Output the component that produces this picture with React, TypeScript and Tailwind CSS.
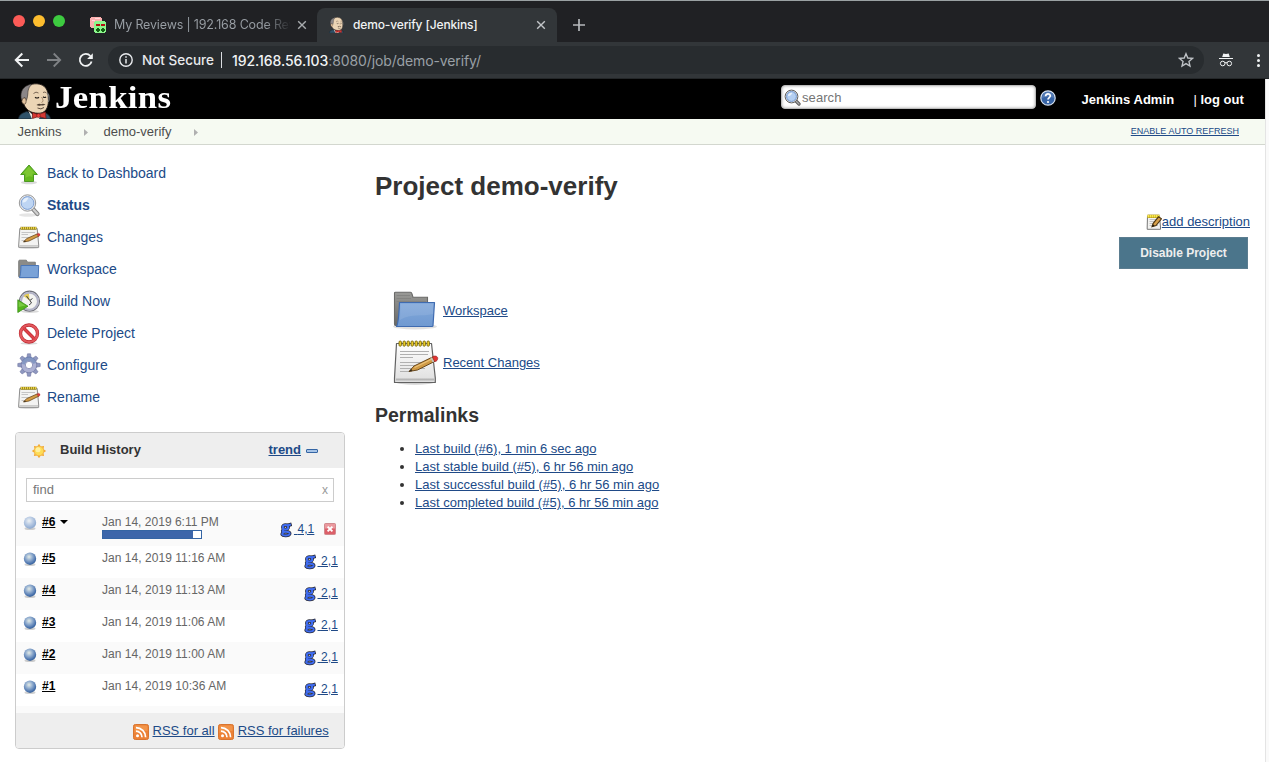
import React from "react";

type IconProps = { className?: string };

const Butler = ({ className }: IconProps) => (
  <svg viewBox="0 0 33 36" className={className} preserveAspectRatio="none">
    <path d="M.5 36C1 31.500 4 30 9 28.500L16 33L24 29C29 30 32 32 32.500 36Z" fill="#2f5269" stroke="#16232c" strokeWidth=".8" />
    <path d="M10 27L16 33L24 29L21 36H14Z" fill="#e9e5de" />
    <path d="M8 25C5 21 4 17 5 10C7 3 13 .6 19 .8C27 1.300 30.500 7 30.300 15C31 22 29 29.500 22 30.200C16 30.500 11 29 8 25Z" fill="#ecd5b5" stroke="#221c18" strokeWidth=".9" />
    <path d="M3.500 17C2 11 3.500 4.500 10 2.200C12 1.400 13 1.200 14 1.300C10.500 4 10 7.500 9.800 11C9.500 14 9 16.500 8 17.500L7 14.500Z" fill="#8b8687" stroke="#2d2927" strokeWidth=".6" />
    <path d="M4.300 16C7 13.500 9 16 7.800 20C7.200 22 4.500 21.500 3.800 18.500Z" fill="#e0c19d" stroke="#4b3a2c" strokeWidth=".7" />
    <path d="M29.300 10C31.500 12 31.500 17 30.300 19" fill="none" stroke="#777" strokeWidth="1.300" />
    <path d="M15.500 10.500Q18 8 20.500 10M25 9.500Q27 8.300 28.500 10" fill="none" stroke="#5c4a3c" strokeWidth=".8" />
    <path d="M17 14.200Q19 15.800 21 14.200M25 13.800Q26.800 15.200 28 13.800" fill="none" stroke="#221c18" strokeWidth="1.100" />
    <path d="M23.500 14Q26.500 18.500 23.500 19.500" fill="none" stroke="#8a6b4d" strokeWidth=".7" />
    <path d="M18.500 22Q21 20 23 21.200Q25 20 27.500 21.500Q25 23 23 22.200Q21 23.500 18.500 22Z" fill="#554538" />
    <path d="M19.500 25Q23 27 26 24.500" fill="none" stroke="#3a2c23" strokeWidth=".8" />
    <path d="M14.500 29.500L20 31.500L27.500 29L28 35.500L20.500 33.500L14.500 35.500Z" fill="#d33833" stroke="#6d1512" strokeWidth=".7" />
    <ellipse cx="20.500" cy="32.500" rx="1.800" ry="2" fill="#ef3d3a" stroke="#6d1512" strokeWidth=".5" />
  </svg>
);

const Magnifier = ({ className }: IconProps) => (
  <svg viewBox="0 0 24 24" className={className}>
    <ellipse cx="11" cy="22" rx="9" ry="1.700" fill="#000" opacity=".1" />
    <path d="M15.500 15.500L20.500 21" stroke="#858585" strokeWidth="4.200" strokeLinecap="round" />
    <path d="M16 16L20.500 21" stroke="#cfcfcf" strokeWidth="2.200" strokeLinecap="round" />
    <circle cx="10.500" cy="10" r="8.200" fill="#eee" stroke="#8d8d8d" strokeWidth=".9" />
    <circle cx="10.500" cy="10" r="6.400" fill="#bed5f3" stroke="#7d9fd3" strokeWidth="1" />
    <path d="M5.500 9.500C5.500 6 8.500 4.300 11.500 4.700C9.500 8.500 8 10 5.500 9.500Z" fill="#e6f0fb" />
  </svg>
);

const SearchGlass = ({ className }: IconProps) => (
  <svg viewBox="0 0 17 17" className={className}>
    <path d="M11.500 11.500L15 15" stroke="#555" strokeWidth="3.200" strokeLinecap="round" />
    <path d="M12 12L15 15" stroke="#aaa" strokeWidth="1.400" strokeLinecap="round" />
    <circle cx="7.500" cy="7.500" r="6.400" fill="#e4e4e4" stroke="#5f5f5f" strokeWidth="1" />
    <circle cx="7.500" cy="7.500" r="4.900" fill="#b4cff2" stroke="#6f96d0" strokeWidth="1" />
    <path d="M4 7C4 4.500 6 3.500 8.500 3.800C7 6.500 6 7.500 4 7Z" fill="#e6f0fb" />
  </svg>
);

const Notepad = ({ className }: IconProps) => (
  <svg viewBox="0 0 48 48" className={className}>
    <defs>
      <linearGradient id="paper" x1="0" y1="0" x2="0" y2="1">
        <stop offset="0" stopColor="#fff" />
        <stop offset="1" stopColor="#dedede" />
      </linearGradient>
    </defs>
    <ellipse cx="24" cy="43.500" rx="19" ry="2.200" fill="#000" opacity=".18" />
    <path d="M5.500 4.500H40.500L44.300 39V43.500H3.500V39Z" fill="url(#paper)" stroke="#626262" strokeWidth="1.200" strokeLinejoin="round" />
    <path d="M5 40.500H43" stroke="#b5b5b5" strokeWidth="2" />
    <path d="M9 12.500H38M9 15.500H37M9 18.500H22M9 23.500H38M9 26.500H33M9 29.500H34M9 32.500H21" stroke="#b0b0b0" strokeWidth="1.100" />
    {[9, 13, 17, 21, 25, 29, 33, 37].map((x) => (
      <rect key={x} x={x - 1} y="2" width="2.400" height="5.200" rx="1.100" fill="#f5d528" stroke="#75640c" strokeWidth=".9" />
    ))}
    <path d="M18 32.500L23 27L40.500 18.500C43 17 46.500 19 44.500 22L26.500 31Z" fill="#cf9a45" stroke="#5b3b12" strokeWidth=".9" />
    <path d="M23.500 28.500L41 20" stroke="#ecc27a" strokeWidth="1.300" />
    <path d="M41.500 17.800C44 16 47.800 17.500 46.500 20.500C46 22 45 22.500 43.500 22.500Z" fill="#e33434" stroke="#8a2222" strokeWidth=".6" />
    <path d="M40 18.700L42.500 23" stroke="#c2c2c2" strokeWidth="1.600" />
    <path d="M18 32.500L20.200 30L21.500 31.500Z" fill="#2c2418" />
  </svg>
);

const NotepadSmall = ({ className }: IconProps) => (
  <svg viewBox="0 0 24 24" className={className}>
    <ellipse cx="12" cy="22.800" rx="10" ry="1" fill="#000" opacity=".18" />
    <path d="M2.800 3.500H20.200L21.700 20V22.300H1.700V20Z" fill="#f3f3f2" stroke="#808080" strokeWidth=".9" />
    <path d="M2.500 20.800H21" stroke="#bbb" strokeWidth="1" />
    <path d="M4.500 7.500H18M4.500 9.500H11M4.500 12.500H16M4.500 15.500H11" stroke="#c0c0c0" strokeWidth=".9" />
    <path d="M3.500 3.300H19.500" stroke="#8e7c1c" strokeWidth="3" />
    <path d="M4 3.200H19.500" stroke="#e8d144" strokeWidth="2.200" strokeDasharray="1.200 .8" />
    <path d="M6.500 17L9.500 13.700L20 9L22 11L12 16Z" fill="#d39c45" stroke="#6a481b" strokeWidth=".8" />
    <path d="M19.800 9L21.500 8.200Q24 9 22.600 10.800L21.400 11.500Z" fill="#dc3c3c" stroke="#933" strokeWidth=".4" />
    <path d="M6.500 17L8 15.400L9 16.400Z" fill="#2c2418" />
  </svg>
);

const EditNote = ({ className }: IconProps) => (
  <svg viewBox="0 0 16 16" className={className}>
    <path d="M1.500 2H13.500L14.500 13V15.300H1.200V13Z" fill="#f2f2f0" stroke="#777" strokeWidth="1" />
    <path d="M3.500 5.500H11M3.500 7.500H9M3.500 9.500H7M3.500 11.500H12" stroke="#b8b8b8" strokeWidth=".8" />
    <path d="M1.500 2.300H13.500" stroke="#a98c0a" strokeWidth="3.400" />
    <path d="M1.500 2.200H13.500" stroke="#fae94e" strokeWidth="2.600" strokeDasharray="1.700 .4" />
    <path d="M6 12.700L7.200 9.300L12.500 2.800L15.500 4.800L10 11.500Z" fill="#d7a04b" stroke="#4d3510" strokeWidth="1.100" />
    <path d="M6 12.700L6.900 10.300L8.700 11.900Z" fill="#221a0d" />
  </svg>
);

const Folder = ({ className }: IconProps) => (
  <svg viewBox="0 0 48 48" className={className}>
    <defs>
      <linearGradient id="folder-front" x1="0" y1="0" x2="0" y2="1">
        <stop offset="0" stopColor="#82a8da" />
        <stop offset="1" stopColor="#6f99d1" />
      </linearGradient>
      <linearGradient id="folder-back" x1="0" y1="0" x2="0" y2="1">
        <stop offset="0" stopColor="#9a9a97" />
        <stop offset="1" stopColor="#686866" />
      </linearGradient>
    </defs>
    <ellipse cx="24" cy="39.500" rx="22" ry="3" fill="#000" opacity=".12" />
    <path d="M3.500 6Q3.500 5.300 4.500 5.300H19.500Q20.500 5.300 21 7L22 10.200H36.500V38.500H4.500Q3.500 38.500 3.500 37Z" fill="url(#folder-back)" stroke="#6a6a68" strokeWidth="1.100" />
    <path d="M5.500 8.500H19M5.500 11.500H20M5.500 14.500H35" stroke="#80807d" strokeWidth=".8" />
    <path d="M8.500 15.500H43.500L42 38.500Q42 39.500 41 39.500H5.500Q7.500 37 8.500 15.500Z" fill="url(#folder-front)" stroke="#3f6bb0" strokeWidth="1.200" strokeLinejoin="round" />
    <path d="M9.500 17H42.500L42 27C31 30 20 26 9 33Z" fill="#fff" opacity=".1" />
  </svg>
);

const FolderSmall = ({ className }: IconProps) => (
  <svg viewBox="0 0 24 24" className={className}>
    <ellipse cx="12" cy="21" rx="11" ry="1.500" fill="#000" opacity=".12" />
    <path d="M1.700 4.200Q1.700 3.200 2.700 3.200H9.300L10.500 5.200H18.300V20.300H2.700Q1.700 20.300 1.700 19.300Z" fill="#8b8b89" stroke="#767674" strokeWidth=".9" />
    <path d="M4 8.500H21.700L21.200 20.500H2.500Q3.800 18 4 8.500Z" fill="#7aa2d7" stroke="#4a76b8" strokeWidth="1" />
  </svg>
);

const UpArrow = ({ className }: IconProps) => (
  <svg viewBox="0 0 24 24" className={className}>
    <ellipse cx="12" cy="21.500" rx="8" ry="1.800" fill="#000" opacity=".15" />
    <path d="M12 4L20.300 13.500H16.500V20.500H7.500V13.500H3.700Z" fill="#65b91f" stroke="#4b9a22" strokeWidth="1" strokeLinejoin="round" />
    <path d="M12 5.500L18 12.500H15.500V16C12 14 9.500 16 8.500 17V12.500H6Z" fill="#8ed040" opacity=".6" />
  </svg>
);

const ClockPlay = ({ className }: IconProps) => (
  <svg viewBox="0 0 24 24" className={className}>
    <ellipse cx="13" cy="22.500" rx="9" ry="1.400" fill="#000" opacity=".15" />
    <circle cx="12.500" cy="12.200" r="10" fill="#f1f1ee" stroke="#70717a" strokeWidth="1.200" />
    <circle cx="12.500" cy="12.200" r="8.500" fill="#f4f4f1" stroke="#b3b4c8" strokeWidth="2" />
    <path d="M12.500 11.500L6.500 7Q8.500 4.700 12 4.800Z" fill="#e2ca55" />
    <path d="M9.500 7L12.800 11.500L15.500 9.500M13 11.500L14.500 14L12 16" fill="none" stroke="#444" strokeWidth="1" />
    <path d="M.8 10.800L11 17.200L.8 23.500Z" fill="#55b51d" stroke="#388f16" strokeWidth=".8" />
    <path d="M1.700 12.500L8.500 16.500L1.700 18Z" fill="#8ed659" opacity=".65" />
  </svg>
);

const Forbidden = ({ className }: IconProps) => (
  <svg viewBox="0 0 24 24" className={className}>
    <ellipse cx="12" cy="22.400" rx="8.500" ry="1.300" fill="#000" opacity=".15" />
    <circle cx="12" cy="12.500" r="8.500" fill="#fff" stroke="#bd2830" strokeWidth="3.300" />
    <path d="M6 6.500L18 18.500" stroke="#bd2830" strokeWidth="3.400" />
    <circle cx="12" cy="12.500" r="8.500" fill="none" stroke="#e3595e" strokeWidth="2.200" />
    <path d="M6 6.500L18 18.500" stroke="#dd4249" strokeWidth="2.200" />
  </svg>
);

const Gear = ({ className }: IconProps) => (
  <svg viewBox="0 0 24 24" className={className}>
    <g fill="#8f98c0" stroke="#7076a1" strokeWidth=".6">
      {[0, 45, 90, 135, 180, 225, 270, 315].map((a) => (
        <path key={a} d="M9.800 5L10.500 .8H13.500L14.200 5Z" transform={`rotate(${a} 12 12)`} />
      ))}
      <circle cx="12" cy="12" r="7.800" />
    </g>
    <circle cx="12" cy="12" r="7.300" fill="#adb1d3" />
    <path d="M5 11A7 7 0 0 1 19 10Q12 13 5 11Z" fill="#6985b7" opacity=".6" />
    <circle cx="12" cy="12" r="3.700" fill="#fff" stroke="#8a8fb5" strokeWidth=".9" />
  </svg>
);

const Sun = ({ className }: IconProps) => (
  <svg viewBox="0 0 16 16" className={className}>
    {[0, 45, 90, 135, 180, 225, 270, 315].map((a) => (
      <path key={a} d="M6.300 3.500L8 .8L9.700 3.500Z" fill="#f3a72a" transform={`rotate(${a} 8 8)`} />
    ))}
    <circle cx="8" cy="8" r="4.800" fill="#fddc55" stroke="#f5b545" strokeWidth="1" />
    <circle cx="7" cy="6.800" r="2.500" fill="#fff0a0" />
  </svg>
);

const Ball = ({ light = false }: { light?: boolean }) => (
  <svg viewBox="0 0 16 16" className="size-4">
    <defs>
      <radialGradient id={light ? "ball-light" : "ball-dark"} cx=".42" cy=".35" r=".68">
        <stop offset="0" stopColor={light ? "#eef2f3" : "#e4ebe6"} />
        <stop offset=".4" stopColor={light ? "#c0d0e6" : "#94afd0"} />
        <stop offset=".85" stopColor={light ? "#93aed3" : "#426ca9"} />
        <stop offset="1" stopColor={light ? "#93abca" : "#3b608e"} />
      </radialGradient>
    </defs>
    <ellipse cx="8" cy="13.500" rx="5.500" ry="1.500" fill="#000" opacity=".18" />
    <circle cx="8" cy="7.700" r="6.200" fill={light ? "url(#ball-light)" : "url(#ball-dark)"} />
  </svg>
);

const Rss = () => (
  <svg viewBox="0 0 16 16" className="mt-[2px] size-4">
    <rect x=".5" y=".5" width="15" height="15" rx="1.800" fill="#ec8136" stroke="#d9752f" />
    <path d="M1.500 3Q1.500 1.500 3 1.500H13Q14.500 1.500 14.500 3V7Q8 6 1.500 9Z" fill="#f7a257" opacity=".6" />
    <circle cx="4.500" cy="11.700" r="1.500" fill="#fff" />
    <path d="M3 7.200A6 6 0 0 1 9 13.200M3 3.600A9.600 9.600 0 0 1 12.600 13.200" fill="none" stroke="#fff" strokeWidth="1.700" />
  </svg>
);

const StopButton = () => (
  <svg viewBox="0 0 12 12" className="size-3">
    <rect x=".5" y=".5" width="11" height="11" rx="1" fill="#dc5f69" stroke="#d08a8e" />
    <rect x="1" y="1" width="10" height="4.500" fill="#efa7ab" opacity=".8" />
    <path d="M3.600 3.600L8.400 8.400M8.400 3.600L3.600 8.400" stroke="#fff" strokeWidth="1.900" />
  </svg>
);

const ReviewsIcon = () => (
  <svg viewBox="0 0 16 16" className="size-4" shapeRendering="crispEdges">
    <path d="M0 1H1V0H11V1H12V11H1V10H0Z" fill="#fbb0b0" />
    <path d="M5 1H10V2H5ZM2 3H5V4H2Z" fill="#ffd9d9" />
    <path d="M4 5H5V4H15V5H16V15H15V16H5V15H4Z" fill="#8cf68c" />
    <path d="M6 7H10V9H6ZM11 7H15V9H11Z" fill="#b40e14" />
    <path d="M7 11H9V12H10V14H9V15H7V14H6V12H7ZM12 11H14V12H15V14H14V15H12V14H11V12H12Z" fill="#135f13" />
  </svg>
);

const TabClose = ({ className }: IconProps) => (
  <svg viewBox="0 0 10 10" className={className}>
    <path d="M1.200 1.200L8.800 8.800M8.800 1.200L1.200 8.800" stroke="currentColor" strokeWidth="1.400" />
  </svg>
);

const tasks: { label: string; Icon: React.FC<IconProps>; active?: boolean }[] = [
  { label: "Back to Dashboard", Icon: UpArrow },
  { label: "Status", Icon: Magnifier, active: true },
  { label: "Changes", Icon: NotepadSmall },
  { label: "Workspace", Icon: FolderSmall },
  { label: "Build Now", Icon: ClockPlay },
  { label: "Delete Project", Icon: Forbidden },
  { label: "Configure", Icon: Gear },
  { label: "Rename", Icon: NotepadSmall },
];

const builds = [
  { id: "#5", date: "Jan 14, 2019 11:16 AM" },
  { id: "#4", date: "Jan 14, 2019 11:13 AM" },
  { id: "#3", date: "Jan 14, 2019 11:06 AM" },
  { id: "#2", date: "Jan 14, 2019 11:00 AM" },
  { id: "#1", date: "Jan 14, 2019 10:36 AM" },
];

const permalinks = [
  "Last build (#6), 1 min 6 sec ago",
  "Last stable build (#5), 6 hr 56 min ago",
  "Last successful build (#5), 6 hr 56 min ago",
  "Last completed build (#5), 6 hr 56 min ago",
];

function TabStrip() {
  return (
    <div className="flex h-[42px] border-t border-[#9aa1a3] bg-[#202124] font-['Inter',sans-serif]">
      <div className="flex w-[317px] shrink-0 pl-[13px]">
        <div className="mt-[14px] flex h-3 gap-2">
          <span className="size-3 rounded-full bg-[#fc5b57]" />
          <span className="size-3 rounded-full bg-[#fdbd2e]" />
          <span className="size-3 rounded-full bg-[#3dcb40]" />
        </div>
        <div className="mt-4 ml-[25px] h-4">
          <ReviewsIcon />
        </div>
        <div className="mt-[13px] ml-2 w-[177px] bg-gradient-to-r from-[#9aa0a6] from-85% to-transparent bg-clip-text text-[12.500px] leading-[22px] tracking-[-0.160px] whitespace-nowrap text-transparent">
          My Reviews | 192.168 Code Rev
        </div>
        <TabClose className="mt-[19px] ml-[6px] size-[10px] text-[#a8abae]" />
      </div>
      <div className="mt-[7px] flex w-[240px] items-center rounded-t-lg bg-[#323639] pl-3">
        <Butler className="h-4 w-[15px]" />
        <span className="ml-[9px] w-[183px] text-[12px] font-medium tracking-[-0.140px] text-[#f1f3f4]">demo-verify [Jenkins]</span>
        <TabClose className="size-[10px] text-[#c2c5c8]" />
      </div>
      <svg viewBox="0 0 12 12" className="mt-[18px] ml-4 size-3">
        <path d="M6 0V12M0 6H12" stroke="#b5b8bb" strokeWidth="1.700" />
      </svg>
    </div>
  );
}

function Toolbar() {
  return (
    <div className="flex h-[37px] items-center border-b border-[#242729] bg-[#323639] pl-[14px] font-['Inter',sans-serif]">
      <svg viewBox="0 0 16 16" className="size-4">
        <path d="M15 8H2M8.300 1.500L1.800 8L8.300 14.500" fill="none" stroke="#f1f3f4" strokeWidth="2" />
      </svg>
      <svg viewBox="0 0 16 16" className="ml-4 size-4">
        <path d="M1 8H14M7.700 1.500L14.200 8L7.700 14.500" fill="none" stroke="#7f8285" strokeWidth="1.800" />
      </svg>
      <svg viewBox="0 0 16 16" className="ml-4 size-4">
        <path d="M13.600 9.500A6 6 0 1 1 12.400 4" fill="none" stroke="#f1f3f4" strokeWidth="1.800" />
        <path d="M14.800 1.300V7H9.100Z" fill="#f1f3f4" />
      </svg>
      <div className="ml-[14px] flex h-7 w-[1096px] items-center rounded-full bg-[#282c2f] pr-[10px] pl-[11px]">
        <svg viewBox="0 0 14 14" className="size-[14px]">
          <circle cx="7" cy="7" r="6.200" fill="none" stroke="#e8eaed" strokeWidth="1.400" />
          <path d="M7 6V10.500M7 3.300V4.800" stroke="#e8eaed" strokeWidth="1.500" />
        </svg>
        <span className="ml-[9px] w-[79px] text-[13.500px] font-medium whitespace-nowrap text-[#e8eaed]">Not Secure</span>
        <span className="h-4 w-px bg-[#dadce0]" />
        <span className="ml-[10px] flex-1 text-[14px] tracking-[-0.120px] whitespace-nowrap text-[#9aa0a6]">
          <span className="font-medium tracking-[-0.060px] text-[#f1f3f4]">192.168.56.103</span>:8080/job/demo-verify/
        </span>
        <svg viewBox="0 0 24 24" className="size-4">
          <path d="M12 2.500L14.700 9L21.700 9.600L16.400 14.200L18 21L12 17.400L6 21L7.600 14.200L2.300 9.600L9.300 9Z" fill="none" stroke="#c0c4c8" strokeWidth="2" />
        </svg>
      </div>
      <svg viewBox="0 0 14 14" className="ml-[15px] size-[14px]">
        <path d="M4.300 .5L7 1L9.700 .5L10.800 3.900H3.200ZM0 4.900H14V6H0Z" fill="#f1f3f4" />
        <circle cx="3.700" cy="10.500" r="2.300" fill="none" stroke="#f1f3f4" strokeWidth="1" />
        <circle cx="10.300" cy="10.500" r="2.300" fill="none" stroke="#f1f3f4" strokeWidth="1" />
        <path d="M5.800 10Q7 9 8.200 10" fill="none" stroke="#f1f3f4" />
      </svg>
      <div className="ml-6 flex flex-col gap-[2px]">
        <span className="size-[3px] rounded-full bg-[#f1f3f4]" />
        <span className="size-[3px] rounded-full bg-[#f1f3f4]" />
        <span className="size-[3px] rounded-full bg-[#f1f3f4]" />
      </div>
    </div>
  );
}

function Header() {
  return (
    <header className="flex h-10 bg-black text-white">
      <Butler className="mt-1 ml-[18px] h-9 w-[33px]" />
      <div className="ml-[4px] w-[726px]">
        <div className="w-fit origin-left scale-x-[1.140] font-['Liberation_Serif',serif] text-[30.500px] leading-[38px] font-bold tracking-[0.300px]">
          Jenkins
        </div>
      </div>
      <div className="mt-[6px] flex h-6 w-[255px] items-center rounded-[4px] border border-[#bbb] bg-white pl-[2px] text-[13px] text-[#757575] shadow-[inset_0_0_3px_#aaa]">
        <SearchGlass className="size-[17px]" />
        <span className="mt-px ml-px tracking-[0.080px]">search</span>
      </div>
      <svg viewBox="0 0 16 16" className="mt-[11px] ml-1 size-4">
        <circle cx="8" cy="8" r="7.200" fill="#3764a6" stroke="#d7e2f1" strokeWidth="1.200" />
        <path d="M2 8A6 6 0 0 1 14 8Q8 5 2 8Z" fill="#7896c5" opacity=".5" />
        <path d="M5.600 6.200C5.600 3 10.400 3.200 10.300 6C10.200 7.600 8 7.600 8 9.600" fill="none" stroke="#fff" strokeWidth="1.700" />
        <circle cx="8" cy="12" r="1.100" fill="#fff" />
      </svg>
      <span className="mt-[11px] ml-[25.500px] w-[112px] text-[13px] leading-5 font-bold tracking-[0.050px] whitespace-nowrap">Jenkins Admin</span>
      <span className="mt-[11px] text-[13px] leading-5 whitespace-nowrap">
        | <b>log out</b>
      </span>
    </header>
  );
}

const Crumb = () => (
  <svg viewBox="0 0 4 8" className="h-2 w-1">
    <path d="M0 1L4 4.500L0 8Z" fill="#b0b0b0" />
  </svg>
);

const gerritStroke =
  "M8 3.300L10 2.700M3.200 8C1.800 9.500 3 9.700 6 9.700C9.500 9.700 9.900 11 9.600 12C9 13.800 3 14 2.200 12.400C2 11.500 3 10.500 4 10";

const GerritIcon = () => (
  <svg viewBox="0 0 12 16" className="mt-[2px] h-4 w-3">
    <g fill="none" strokeLinecap="square">
      <g stroke="#2b2c38" strokeWidth="3.500">
        <ellipse cx="5.500" cy="5.200" rx="2.700" ry="2.200" />
        <path d={gerritStroke} />
      </g>
      <g stroke="#3f6cf0" strokeWidth="2">
        <ellipse cx="5.500" cy="5.200" rx="2.700" ry="2.200" />
        <path d={gerritStroke} />
      </g>
    </g>
  </svg>
);

function ChangeLink({ count }: { count: string }) {
  return (
    <span className="flex items-center text-[#204a87]">
      <GerritIcon />
      <span className="ml-[2px] text-[12px] leading-4 tracking-[0.100px] whitespace-pre underline"> {count}</span>
    </span>
  );
}

function BuildHistory() {
  return (
    <section className="mt-[19px] ml-[15px] h-[317px] w-[330px] overflow-hidden rounded-[4px] border border-[#ccc] bg-white">
      <div className="flex h-[35px] items-center bg-[#eee] pl-[15px]">
        <Sun className="mt-px size-4" />
        <b className="mt-[-1px] ml-[13px] w-[208.500px] text-[13px] text-[#333]">Build History</b>
        <b className="mt-[-1px] text-[13px] text-[#204a87] underline">trend</b>
        <span className="mt-px ml-[4.500px] h-1 w-3 rounded-[1px] border border-[#3465a4] bg-[#a7c4e7]" />
      </div>
      <div className="mx-[10px] mt-[10px] flex h-6 items-center justify-between border border-[#ccc] px-[6px] text-[13px] text-[#777]">
        <span>find</span>
        <span className="mr-[-1px] text-[12px] text-[#999]">x</span>
      </div>
      <div className="mt-2 flex h-9 bg-[#fafafa] pl-[6px] text-[12px]">
        <div className="mt-[5px] h-4">
          <Ball light />
        </div>
        <b className="mt-[4px] ml-1 leading-4 text-black underline">#6</b>
        <svg viewBox="0 0 8 4" className="mt-[10px] ml-[4.400px] h-1 w-2">
          <path d="M0 0H8L4 4Z" fill="#000" />
        </svg>
        <div className="mt-[4px] ml-[34.200px] w-[178px] leading-4 tracking-[0.020px] text-[#666]">
          Jan 14, 2019 6:11 PM
          <div className="h-[9px] w-[100px] border border-[#3465a4] bg-white">
            <div className="h-full w-[90px] bg-[#3c66aa]" />
          </div>
        </div>
        <div className="mt-[10px] h-4">
          <ChangeLink count="4,1" />
        </div>
        <div className="mt-[13px] ml-[9.500px]">
          <StopButton />
        </div>
      </div>
      <div>
        {builds.map((b) => (
          <div key={b.id} className="flex h-8 pl-[6px] text-[12px] odd:bg-white even:bg-[#fafafa]">
            <div className="mt-[5px] h-4">
              <Ball />
            </div>
            <b className="mt-[4px] ml-1 w-[60px] leading-4 text-black underline">{b.id}</b>
            <span className="mt-[4px] w-[201.500px] leading-4 tracking-[0.040px] text-[#666]">{b.date}</span>
            <div className="mt-[6px] h-4">
              <ChangeLink count="2,1" />
            </div>
          </div>
        ))}
      </div>
      <div className="h-[7px] bg-[#fafafa]" />
      <div className="flex h-[35px] items-center bg-[#eee] pl-[117px] text-[13px] text-[#204a87]">
        <Rss />
        <span className="mr-[3px] ml-[3.500px] underline">RSS for all</span>
        <Rss />
        <span className="ml-1 underline">RSS for failures</span>
      </div>
    </section>
  );
}

export default function App() {
  return (
    <div className="h-[762px] w-[1269px] overflow-hidden bg-white font-['Liberation_Sans',Arial,sans-serif] text-[13px] text-[#333]">
      <TabStrip />
      <Toolbar />
      <div className="flex h-[683px] bg-[#fafafa]">
        <div className="w-[1265px] bg-white shadow-[1px_0_0_#e4e4e4]">
          <Header />
          <nav className="flex h-[26px] items-center border-b border-[#d3d7cf] bg-[#f6faf2] pl-[17.500px] text-[13px] text-[#4d4d4d]">
            <span className="w-[66.500px]">Jenkins</span>
            <Crumb />
            <span className="ml-[15.500px] w-[90.500px]">demo-verify</span>
            <Crumb />
            <span className="mt-px mr-[26px] ml-auto text-[9px] tracking-[0.020px] text-[#204a87] underline">ENABLE AUTO REFRESH</span>
          </nav>
          <div className="flex">
            <aside className="w-[375px] pt-3">
              {tasks.map(({ label, Icon, active }) => (
                <div key={label} className="flex h-8 items-center gap-[6px] pl-[17px] text-[14px] text-[#204a87]">
                  <Icon className="size-6" />
                  <span className={active ? "font-bold" : ""}>{label}</span>
                </div>
              ))}
              <BuildHistory />
            </aside>
            <main className="w-[890px] pt-[25px]">
              <h1 className="text-[26px] leading-8 font-bold">Project demo-verify</h1>
              <div className="mt-[10px] mr-[15px] flex h-5 items-center justify-end text-[#204a87]">
                <EditNote className="size-4" />
                <span className="underline">add description</span>
              </div>
              <div className="mt-[5px] mr-[17px] flex h-8 justify-end">
                <button className="w-[129px] border border-[#5b7d90] bg-[#4b758b] text-[12px] font-bold text-[#eee]">Disable Project</button>
              </div>
              <div className="mt-[18px] ml-4 flex flex-col gap-1 text-[#204a87]">
                <div className="flex h-12 items-center gap-1">
                  <Folder className="size-12" />
                  <span className="underline">Workspace</span>
                </div>
                <div className="flex h-12 items-center gap-1">
                  <Notepad className="size-12" />
                  <span className="underline">Recent Changes</span>
                </div>
              </div>
              <h2 className="mt-4 text-[19.500px] leading-6 font-bold">Permalinks</h2>
              <ul className="mt-[13px] list-disc pl-10 leading-[18px]">
                {permalinks.map((p) => (
                  <li key={p}>
                    <span className="text-[#204a87] underline">{p}</span>
                  </li>
                ))}
              </ul>
            </main>
          </div>
        </div>
      </div>
    </div>
  );
}
